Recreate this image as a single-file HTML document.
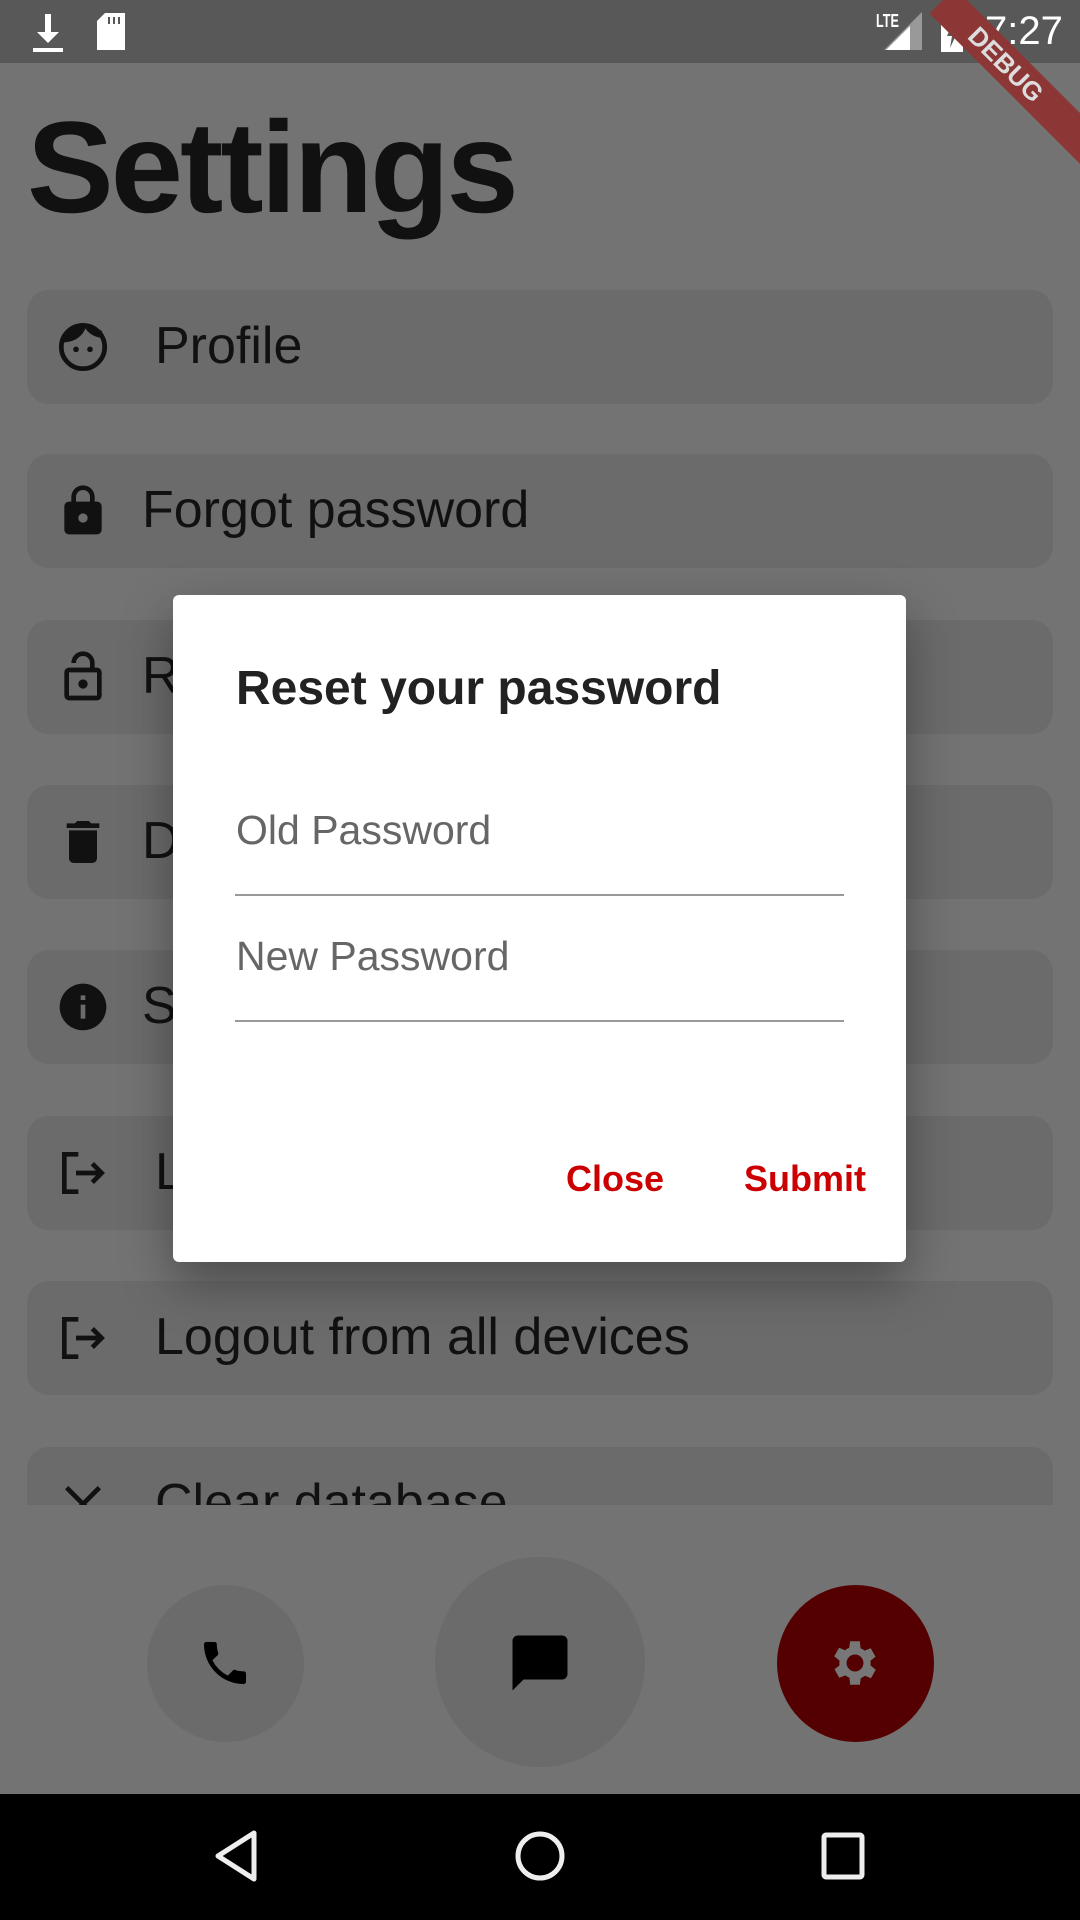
<!DOCTYPE html>
<html><head><meta charset="utf-8"><style>
*{margin:0;padding:0;box-sizing:border-box}
body{width:1080px;height:1920px;background:#737373;position:relative;overflow:hidden;font-family:"Liberation Sans",sans-serif}
.sb{position:absolute;left:0;top:0;width:1080px;height:63px;background:#585858}
.title{position:absolute;left:27px;top:102px;font-size:130px;font-weight:bold;color:#111;letter-spacing:-3px;line-height:1}
.clip{position:absolute;left:0;top:0;width:1080px;height:1505px;overflow:hidden}
.card{position:absolute;left:27px;width:1026px;height:114px;background:#6b6b6b;border-radius:22px}
.card span{position:absolute;top:27px;font-size:52px;color:#111;line-height:1.15}
.card svg{position:absolute;left:28px;top:29px}
.dlg{position:absolute;left:173px;top:595px;width:733px;height:667px;background:#fff;border-radius:6px;box-shadow:0 20px 50px rgba(0,0,0,.35)}
.dt{position:absolute;left:63px;top:66px;font-size:48px;font-weight:bold;color:#222}
.lab{position:absolute;left:63px;font-size:41px;color:#666}
.ul{position:absolute;left:62px;width:609px;height:2px;background:#999}
.btn{position:absolute;top:563px;font-size:36px;font-weight:bold;color:#c00}
.circ{position:absolute;border-radius:50%;background:#6b6b6b}
.nav{position:absolute;left:0;top:1794px;width:1080px;height:126px;background:#000}
</style></head><body>
<div class="sb">
<svg style="position:absolute;left:30px;top:12px" width="36" height="42" viewBox="0 0 36 42"><path d="M15 2h6v18h8L18 31 7 20h8z" fill="#fff"/><rect x="3" y="36" width="30" height="4" fill="#fff"/></svg>
<svg style="position:absolute;left:95px;top:12px" width="32" height="40" viewBox="0 0 32 40"><path d="M10 1h20v37H2V9z" fill="#fff"/><rect x="13" y="5" width="2" height="7" fill="#585858"/><rect x="18" y="5" width="2" height="7" fill="#585858"/><rect x="23" y="5" width="2" height="7" fill="#585858"/></svg>
<div style="position:absolute;left:876px;top:11px;font-size:18px;font-weight:bold;color:#fff;transform:scaleX(.7);transform-origin:left">LTE</div>
<svg style="position:absolute;left:882px;top:12px" width="40" height="40"><path d="M40 0V38H2z" fill="#999"/><path d="M28 14V38H4z" fill="#fff"/></svg>
<svg style="position:absolute;left:940px;top:12px" width="24" height="40"><rect x="7" y="0" width="10" height="4" fill="#fff"/><rect x="1" y="4" width="22" height="36" fill="#fff"/><path d="M14 8l-7 16h5l-2 12 8-17h-5z" fill="#585858"/></svg>
<div style="position:absolute;left:985px;top:9px;font-size:40px;color:#fff">7:27</div>
</div>
<div style="position:absolute;left:955px;top:-12px;width:220px;height:36px;background:#8c3636;transform:rotate(45deg);transform-origin:0 0;color:#ddd;font-weight:bold;font-size:26px;text-align:center;line-height:36px;text-indent:-40px">DEBUG</div>
<div class="title">Settings</div>
<div class="clip">
<div class="card" style="top:290px"><svg width="56" height="56" viewBox="0 0 24 24"><circle cx="12" cy="12" r="9.3" fill="none" stroke="#111" stroke-width="2"/><path d="M3.5 10c4 0 8-2 9.5-6 2 3 5 4 7.5 4L20 5 12 2.5 4 6z" fill="#111"/><circle cx="9" cy="13" r="1.2" fill="#111"/><circle cx="15" cy="13" r="1.2" fill="#111"/></svg><span style="left:128px">Profile</span></div>
<div class="card" style="top:454px"><svg width="56" height="56" viewBox="0 0 24 24"><path d="M18 8h-1V6A5 5 0 007 6v2H6a2 2 0 00-2 2v10a2 2 0 002 2h12a2 2 0 002-2V10a2 2 0 00-2-2zM12 17a2 2 0 110-4 2 2 0 010 4zM9 8V6a3 3 0 016 0v2z" fill="#111"/></svg><span style="left:115px">Forgot password</span></div>
<div class="card" style="top:620px"><svg width="56" height="56" viewBox="0 0 24 24"><path d="M18 8h-1V6A5 5 0 007 6h2a3 3 0 016 0v2H6a2 2 0 00-2 2v10a2 2 0 002 2h12a2 2 0 002-2V10a2 2 0 00-2-2zm0 12H6V10h12zM12 17a2 2 0 100-4 2 2 0 000 4z" fill="#111"/></svg><span style="left:115px">Reset password</span></div>
<div class="card" style="top:785px"><svg width="56" height="56" viewBox="0 0 24 24"><path d="M6 19a2 2 0 002 2h8a2 2 0 002-2V7H6zM19 4h-3.5l-1-1h-5l-1 1H5v2h14z" fill="#111"/></svg><span style="left:115px">Delete account</span></div>
<div class="card" style="top:950px"><svg width="56" height="56" viewBox="0 0 24 24"><path d="M12 2a10 10 0 100 20 10 10 0 000-20zm1 15h-2v-6h2zm0-8h-2V7h2z" fill="#111"/></svg><span style="left:115px">Support</span></div>
<div class="card" style="top:1116px"><svg width="56" height="56" viewBox="0 0 24 24"><path d="M10 4H4v16h6M9 12h11M16 8l4 4-4 4" fill="none" stroke="#111" stroke-width="2"/></svg><span style="left:128px">Logout</span></div>
<div class="card" style="top:1281px"><svg width="56" height="56" viewBox="0 0 24 24"><path d="M10 4H4v16h6M9 12h11M16 8l4 4-4 4" fill="none" stroke="#111" stroke-width="2"/></svg><span style="left:128px">Logout from all devices</span></div>
<div class="card" style="top:1447px"><svg width="56" height="56" viewBox="0 0 24 24"><path d="M5 5l14 14M19 5L5 19" stroke="#111" stroke-width="2"/></svg><span style="left:128px">Clear database</span></div>
</div>
<div class="circ" style="left:147px;top:1585px;width:157px;height:157px"></div>
<div class="circ" style="left:435px;top:1557px;width:210px;height:210px"></div>
<div class="circ" style="left:777px;top:1585px;width:157px;height:157px;background:#550000"></div>
<svg style="position:absolute;left:197px;top:1635px" width="56" height="56" viewBox="0 0 24 24"><path d="M6.6 10.8a15 15 0 006.6 6.6l2.2-2.2c.3-.3.7-.4 1-.2 1.1.4 2.3.6 3.6.6.6 0 1 .4 1 1V20c0 .6-.4 1-1 1A17 17 0 013 4c0-.6.4-1 1-1h3.5c.6 0 1 .4 1 1 0 1.3.2 2.5.6 3.6.1.3 0 .7-.2 1z" fill="#000"/></svg>
<svg style="position:absolute;left:507px;top:1630px" width="66" height="66" viewBox="0 0 24 24"><path d="M20 2H4a2 2 0 00-2 2v18l4-4h14a2 2 0 002-2V4a2 2 0 00-2-2z" fill="#000"/></svg>
<svg style="position:absolute;left:826px;top:1634px" width="58" height="58" viewBox="0 0 24 24"><path d="M19.4 13a7.5 7.5 0 000-2l2.1-1.6-2-3.5-2.5 1a7 7 0 00-1.7-1L15 3h-4l-.4 2.7a7 7 0 00-1.7 1l-2.5-1-2 3.5L6.6 11a7.5 7.5 0 000 2l-2.1 1.6 2 3.5 2.5-1a7 7 0 001.7 1L11 21h4l.4-2.7a7 7 0 001.7-1l2.5 1 2-3.5zM13 15.5a3.5 3.5 0 110-7 3.5 3.5 0 010 7z" fill="#777" transform="translate(-1 0)"/></svg>
<div class="dlg">
<div class="dt">Reset your password</div>
<div class="lab" style="top:212px">Old Password</div>
<div class="ul" style="top:299px"></div>
<div class="lab" style="top:338px">New Password</div>
<div class="ul" style="top:425px"></div>
<div class="btn" style="left:393px">Close</div>
<div class="btn" style="left:571px">Submit</div>
</div>
<div class="nav">
<svg style="position:absolute;left:212px;top:35px" width="50" height="54"><path d="M42 4L6 27l36 23z" fill="none" stroke="#eee" stroke-width="5" stroke-linejoin="round"/></svg>
<svg style="position:absolute;left:514px;top:35px" width="52" height="54"><circle cx="26" cy="27" r="22" fill="none" stroke="#eee" stroke-width="5"/></svg>
<svg style="position:absolute;left:820px;top:37px" width="48" height="50"><rect x="4" y="4" width="38" height="42" rx="2" fill="none" stroke="#eee" stroke-width="5"/></svg>
</div>
</body></html>
